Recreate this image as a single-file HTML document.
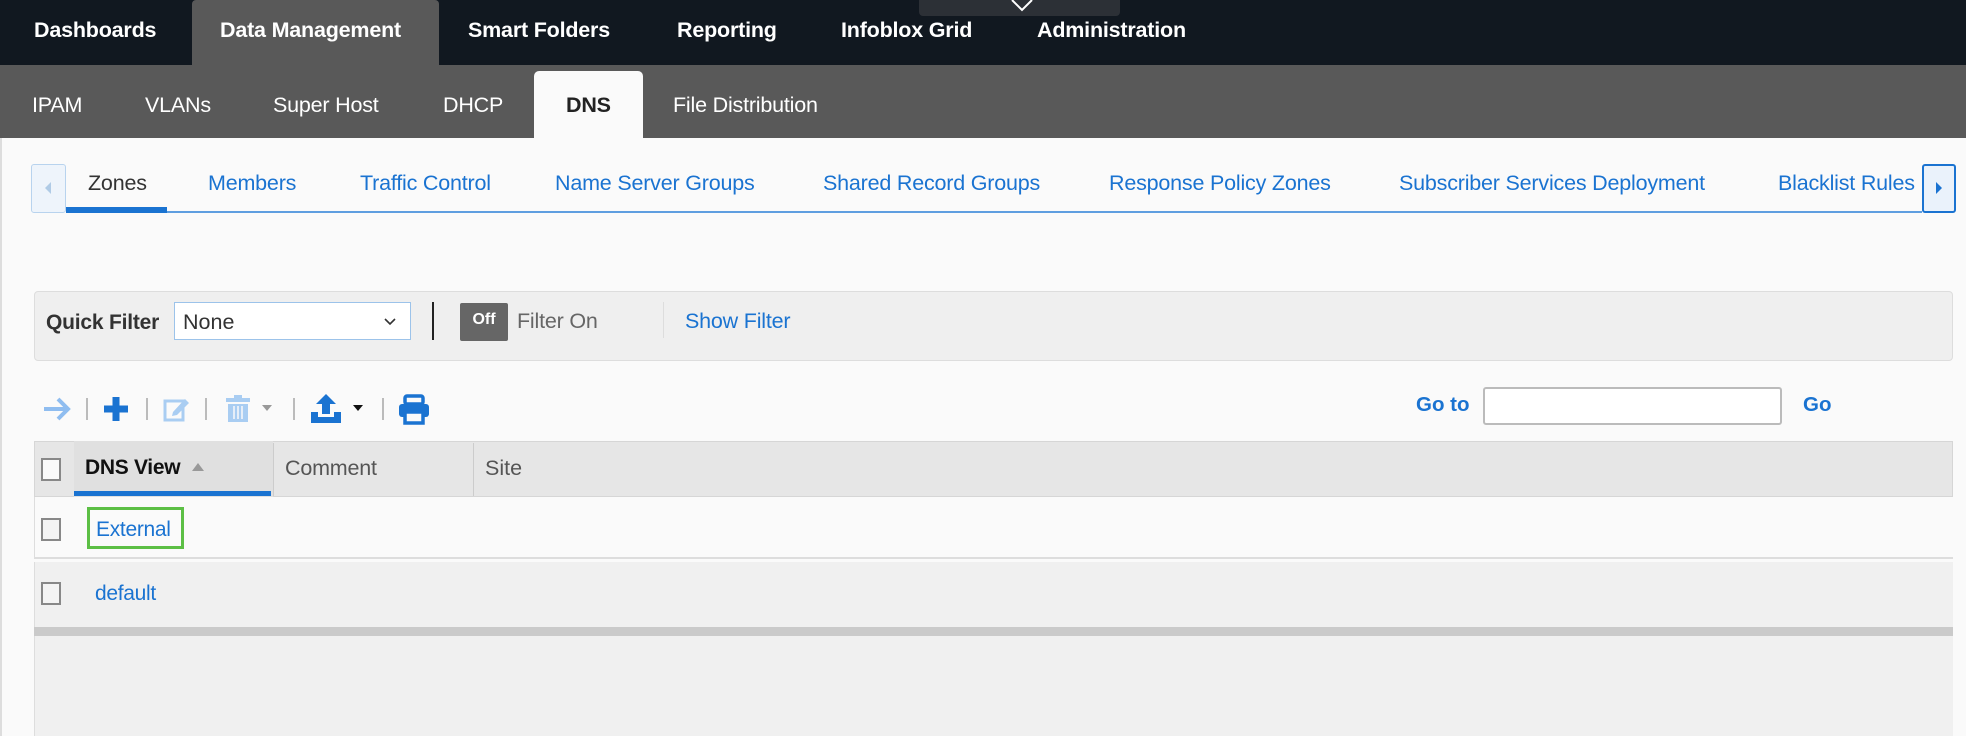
<!DOCTYPE html>
<html><head><meta charset="utf-8"><style>
*{box-sizing:border-box;margin:0;padding:0}
body{width:1966px;height:736px;overflow:hidden;background:#fafafa;font-family:"Liberation Sans",Arial,sans-serif;position:relative}
.a{position:absolute;white-space:nowrap}
.top{left:0;top:0;width:1966px;height:65px;background:#111820}
.nav{color:#fff;font-weight:bold;font-size:21.5px;top:18px;letter-spacing:-0.2px}
.sub{left:0;top:65px;width:1966px;height:73px;background:#595959}
.sn{color:#fff;font-size:21.5px;top:93px;letter-spacing:-0.2px}
.tab{color:#1a73d1;font-size:21.5px;top:171px;letter-spacing:-0.2px}
.blue{color:#1a73d1}
.sep{width:2px;height:22px;background:#bbb;top:398px}
</style></head><body>
<div class="a top"></div>
<div class="a" style="left:192px;top:0;width:247px;height:65px;background:#595959;border-radius:4px 4px 0 0"></div>
<div class="a" style="left:919px;top:0;width:201px;height:16px;background:#2c3036;border-radius:0 0 4px 4px"></div>
<svg class="a" style="left:1010px;top:0" width="24" height="12"><path d="M2 0 L12 10 L22 0" fill="none" stroke="#fff" stroke-width="2"/></svg>
<div class="a nav" style="left:34px">Dashboards</div>
<div class="a nav" style="left:220px">Data Management</div>
<div class="a nav" style="left:468px">Smart Folders</div>
<div class="a nav" style="left:677px">Reporting</div>
<div class="a nav" style="left:841px">Infoblox Grid</div>
<div class="a nav" style="left:1037px">Administration</div>
<div class="a sub"></div>
<div class="a" style="left:534px;top:71px;width:109px;height:70px;background:#fafafa;border-radius:5px 5px 0 0"></div>
<div class="a sn" style="left:32px">IPAM</div>
<div class="a sn" style="left:145px">VLANs</div>
<div class="a sn" style="left:273px">Super Host</div>
<div class="a sn" style="left:443px">DHCP</div>
<div class="a sn" style="left:566px;color:#222;font-weight:bold">DNS</div>
<div class="a sn" style="left:673px">File Distribution</div>
<div class="a" style="left:0;top:138px;width:2px;height:598px;background:#ddd"></div>
<!-- tabs -->
<div class="a" style="left:31px;top:164px;width:35px;height:49px;border:1px solid #b8d3ee;background:#eef4fb;border-radius:3px"></div>
<svg class="a" style="left:43px;top:181px" width="10" height="14"><path d="M8 1 L2 7 L8 13Z" fill="#b0cbe6"/></svg>
<div class="a" style="left:66px;top:211px;width:1856px;height:2px;background:#5e9ee0"></div>
<div class="a" style="left:66px;top:207px;width:101px;height:6px;background:#1a73d1"></div>
<div class="a tab" style="left:88px;color:#333">Zones</div>
<div class="a tab" style="left:208px">Members</div>
<div class="a tab" style="left:360px">Traffic Control</div>
<div class="a tab" style="left:555px">Name Server Groups</div>
<div class="a tab" style="left:823px">Shared Record Groups</div>
<div class="a tab" style="left:1109px">Response Policy Zones</div>
<div class="a tab" style="left:1399px">Subscriber Services Deployment</div>
<div class="a tab" style="left:1778px;width:144px;overflow:hidden">Blacklist Rules</div>
<div class="a" style="left:1922px;top:164px;width:34px;height:49px;border:2px solid #1a73d1;background:#eaf2fb;border-radius:3px"></div>
<svg class="a" style="left:1934px;top:181px" width="10" height="14"><path d="M2 1 L8 7 L2 13Z" fill="#1a73d1"/></svg>
<!-- filter -->
<div class="a" style="left:34px;top:291px;width:1919px;height:70px;background:#efefef;border:1px solid #ddd;border-radius:4px"></div>
<div class="a" style="left:46px;top:311px;font-size:21px;font-weight:bold;color:#333;letter-spacing:-0.2px">Quick Filter</div>
<div class="a" style="left:174px;top:302px;width:237px;height:38px;background:#fff;border:1px solid #9cc3ea"></div>
<div class="a" style="left:183px;top:310px;font-size:21.5px;color:#333">None</div>
<svg class="a" style="left:384px;top:318px" width="12" height="8"><path d="M1 1 L6 6 L11 1" fill="none" stroke="#333" stroke-width="1.6"/></svg>
<div class="a" style="left:432px;top:302px;width:2px;height:38px;background:#222"></div>
<div class="a" style="left:460px;top:303px;width:48px;height:38px;background:#666;border-radius:2px;color:#fff;font-size:16px;font-weight:bold;text-align:center;line-height:34px">Off</div>
<div class="a" style="left:517px;top:309px;font-size:21.5px;color:#666;letter-spacing:-0.2px">Filter On</div>
<div class="a" style="left:663px;top:302px;width:1px;height:36px;background:#ddd"></div>
<div class="a blue" style="left:685px;top:309px;font-size:21.5px;letter-spacing:-0.2px">Show Filter</div>
<!-- toolbar -->
<svg class="a" style="left:42px;top:396px" width="32" height="26"><path d="M2 13 H26 M16 3 L26 13 L16 23" fill="none" stroke="#8fbdf0" stroke-width="4"/></svg>
<div class="a sep" style="left:86px"></div>
<svg class="a" style="left:102px;top:395px" width="28" height="28"><path d="M14 2 V26 M2 14 H26" stroke="#1a73d1" stroke-width="7"/></svg>
<div class="a sep" style="left:146px"></div>
<svg class="a" style="left:163px;top:395px" width="28" height="28"><rect x="2" y="6" width="18" height="19" fill="none" stroke="#a9cdf2" stroke-width="3"/><path d="M10 17 L22 4 L26 8 L14 20 L9 21Z" fill="#a9cdf2"/></svg>
<div class="a sep" style="left:205px"></div>
<svg class="a" style="left:225px;top:395px" width="26" height="28"><rect x="1" y="3" width="24" height="4" fill="#a9cdf2"/><rect x="9" y="0" width="8" height="4" fill="#a9cdf2"/><path d="M3 9 H23 V27 H3Z" fill="#a9cdf2"/><path d="M9 11 V24 M13 11 V24 M17 11 V24" stroke="#fafafa" stroke-width="1.5"/></svg>
<svg class="a" style="left:262px;top:405px" width="10" height="6"><path d="M0 0 H10 L5 6Z" fill="#999"/></svg>
<div class="a sep" style="left:293px"></div>
<svg class="a" style="left:310px;top:394px" width="32" height="30"><path d="M16 0 L26 10 H20 V20 H12 V10 H6Z" fill="#1a73d1"/><path d="M1 18 V29 H31 V18 H24 V23 H8 V18Z" fill="#1a73d1"/></svg>
<svg class="a" style="left:353px;top:405px" width="10" height="6"><path d="M0 0 H10 L5 6Z" fill="#111"/></svg>
<div class="a sep" style="left:382px"></div>
<svg class="a" style="left:398px;top:394px" width="32" height="32"><rect x="7" y="2" width="18" height="8" rx="2" fill="none" stroke="#1a73d1" stroke-width="3.5"/><rect x="1" y="10" width="30" height="13" rx="3" fill="#1a73d1"/><rect x="7" y="18" width="18" height="11" fill="#fafafa" stroke="#1a73d1" stroke-width="3.5"/></svg>
<div class="a blue" style="left:1416px;top:393px;font-size:20.5px;font-weight:bold">Go to</div>
<div class="a" style="left:1483px;top:387px;width:299px;height:38px;background:#fff;border:2px solid #bbb;border-radius:3px"></div>
<div class="a blue" style="left:1803px;top:393px;font-size:20.5px;font-weight:bold">Go</div>
<!-- grid -->
<div class="a" style="left:34px;top:441px;width:1919px;height:56px;background:#e6e6e6;border:1px solid #d6d6d6"></div>
<div class="a" style="left:74px;top:441px;width:199px;height:56px;background:#e0e0e0"></div>
<div class="a" style="left:74px;top:491px;width:197px;height:5px;background:#1a73d1"></div>
<div class="a" style="left:273px;top:443px;width:1px;height:53px;background:#ccc"></div>
<div class="a" style="left:473px;top:443px;width:1px;height:53px;background:#ccc"></div>
<div class="a" style="left:41px;top:458px;width:20px;height:23px;border:2px solid #888;background:#fafafa"></div>
<div class="a" style="left:85px;top:456px;font-size:21px;font-weight:bold;color:#111;letter-spacing:-0.3px">DNS View</div>
<svg class="a" style="left:192px;top:463px" width="12" height="8"><path d="M0 8 L6 0 L12 8Z" fill="#999"/></svg>
<div class="a" style="left:285px;top:456px;font-size:21.5px;color:#555;letter-spacing:-0.2px">Comment</div>
<div class="a" style="left:485px;top:456px;font-size:21.5px;color:#555">Site</div>
<div class="a" style="left:34px;top:497px;width:1919px;height:62px;background:#fafafa;border-left:1px solid #ddd;border-bottom:2px solid #ddd"></div>
<div class="a" style="left:41px;top:518px;width:20px;height:23px;border:2px solid #888;background:#f4f4f4"></div>
<div class="a" style="left:87px;top:507px;width:97px;height:42px;border:3px solid #5cbf45"></div>
<div class="a blue" style="left:96px;top:518px;font-size:21px;letter-spacing:-0.3px">External</div>
<div class="a" style="left:34px;top:562px;width:1919px;height:174px;background:#f0f0f0;border-left:1px solid #ddd"></div>
<div class="a" style="left:34px;top:627px;width:1919px;height:9px;background:#cacaca"></div>
<div class="a" style="left:41px;top:582px;width:20px;height:23px;border:2px solid #888;background:#f4f4f4"></div>
<div class="a blue" style="left:95px;top:582px;font-size:21px;letter-spacing:-0.3px">default</div>
</body></html>
